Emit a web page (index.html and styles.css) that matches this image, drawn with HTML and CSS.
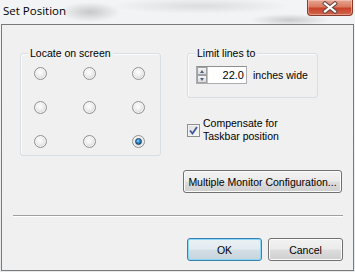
FILE: index.html
```html
<!DOCTYPE html>
<html lang="en">
<head>
    <meta charset="utf-8">
    <title>Set Position</title>
    <link rel="stylesheet" href="styles.css">
</head>
<body>
    <div class="window">
        <div class="titlebar">
            <span class="title">Set Position</span>
            <button class="close-btn" aria-label="Close">
                <svg width="18" height="13" viewBox="0 0 18 13">
                    <path d="M4 2.5 L14 10.5 M14 2.5 L4 10.5" stroke="#6b4a44" stroke-width="4.2" stroke-linecap="square" fill="none"/>
                    <path d="M4 2.5 L14 10.5 M14 2.5 L4 10.5" stroke="#ffffff" stroke-width="2.2" stroke-linecap="square" fill="none"/>
                </svg>
            </button>
        </div>

        <div class="client">
            <div class="top">
                <div class="group locate">
                    <span class="group-label">Locate on screen</span>
                    <div class="radio-grid">
                        <span class="radio"></span>
                        <span class="radio"></span>
                        <span class="radio"></span>
                        <span class="radio"></span>
                        <span class="radio"></span>
                        <span class="radio"></span>
                        <span class="radio"></span>
                        <span class="radio"></span>
                        <span class="radio checked"></span>
                    </div>
                </div>

                <div class="side">
                    <div class="group limit">
                        <span class="group-label">Limit lines to</span>
                        <div class="limit-row">
                            <div class="spin">
                                <span class="spin-btns">
                                    <span class="spin-up"></span>
                                    <span class="spin-down"></span>
                                </span>
                                <span class="spin-value">22.0</span>
                            </div>
                            <span>inches wide</span>
                        </div>
                    </div>

                    <label class="check">
                        <span class="check-box">
                            <svg width="9" height="9" viewBox="0 0 9 9">
                                <path d="M1 4.5 L3.5 7.5 L8 1" stroke="#3d5a9c" stroke-width="1.8" fill="none"/>
                            </svg>
                        </span>
                        <span class="check-text">Compensate for<br>Taskbar position</span>
                    </label>

                    <button class="btn monitor-btn">Multiple Monitor Configuration...</button>
                </div>
            </div>

            <hr class="separator">

            <div class="actions">
                <button class="btn default">OK</button>
                <button class="btn">Cancel</button>
            </div>
        </div>
    </div>
</body>
</html>
```

FILE: styles.css
```css
:root {
    --face: #f0f0f0;
    --text: #000000;
    --group-border: #d5dfe5;
    --btn-border: #707070;
    --default-border: #3c7fb1;
}

* {
    box-sizing: border-box;
}

html, body {
    margin: 0;
    padding: 0;
}

body {
    width: 355px;
    height: 272px;
    overflow: hidden;
    font-family: "Liberation Sans", Arial, sans-serif;
    font-size: 10.5px;
    color: var(--text);
    background: #e9ecee;
}

.window {
    width: 355px;
    height: 272px;
    background:
        radial-gradient(ellipse 30px 10px at 90px 12px, rgba(120, 120, 120, 0.35), transparent),
        radial-gradient(ellipse 90px 8px at 200px 6px, rgba(150, 150, 150, 0.25), transparent),
        radial-gradient(ellipse 40px 6px at 290px 20px, rgba(110, 110, 110, 0.3), transparent),
        linear-gradient(#f3f4f5, #e6e9eb);
    display: flex;
    flex-direction: column;
}

.titlebar {
    height: 24px;
    display: flex;
    justify-content: space-between;
    align-items: flex-start;
}

.title {
    font-family: "Open Sans", "Noto Sans", sans-serif;
    font-size: 11.5px;
    line-height: 16px;
    margin: 3px 0 0 3px;
    color: #000;
}

.close-btn {
    width: 46px;
    height: 16px;
    margin-right: 2px;
    padding: 0;
    border: 1px solid #8a3a2c;
    border-top: none;
    border-radius: 0 0 4px 4px;
    background: linear-gradient(#e7a592 0%, #d97a61 45%, #c7432a 55%, #d0674c 100%);
    box-shadow: inset 0 0 0 1px rgba(255, 220, 210, 0.45);
    display: flex;
    align-items: center;
    justify-content: center;
}

.client {
    flex: 1;
    margin: 0 1px 1px 1px;
    border: 1px solid #7a7a7a;
    background: var(--face);
    display: flex;
    flex-direction: column;
}

.top {
    display: flex;
    align-items: flex-start;
    padding: 28px 0 0 18px;
}

.group {
    border: 1px solid var(--group-border);
    border-radius: 3px;
    box-shadow: inset 1px 1px 0 #fbfcfd;
}

.group-label {
    display: table;
    margin: -7px 0 0 7px;
    padding: 0 2px;
    line-height: 13px;
    background: var(--face);
}

.locate {
    width: 141px;
    padding-bottom: 7px;
}

.radio-grid {
    display: grid;
    grid-template-columns: repeat(3, 13px);
    justify-content: space-between;
    row-gap: 21px;
    margin: 7px 15px 0 13px;
}

.radio {
    width: 13px;
    height: 13px;
    border-radius: 50%;
    border: 1px solid #929292;
    background: radial-gradient(circle at 45% 40%, #ffffff 0%, #f1f1f1 35%, #d4d4d4 80%, #c8c8c8 100%);
    box-shadow: inset 0 0 0 1px rgba(255, 255, 255, 0.6);
    display: flex;
    align-items: center;
    justify-content: center;
}

.radio.checked::after {
    content: "";
    width: 7px;
    height: 7px;
    border-radius: 50%;
    background: radial-gradient(circle at 40% 35%, #8fd3ff 0%, #2b86c8 45%, #17507e 100%);
    border: 1px solid #1c3e5e;
    box-sizing: border-box;
}

.side {
    display: flex;
    flex-direction: column;
    align-items: flex-start;
    margin-left: 22px;
}

.limit {
    width: 131px;
    margin-left: 4px;
    padding-bottom: 13px;
}

.limit-row {
    display: flex;
    align-items: center;
    gap: 6px;
    margin: 6px 0 0 8px;
}

.spin {
    width: 51px;
    height: 18px;
    border: 1px solid #abadb3;
    border-top-color: #8e8f8f;
    background: #fff;
    display: flex;
    align-items: center;
}

.spin-btns {
    width: 11px;
    height: 16px;
    display: flex;
    flex-direction: column;
    border-right: 1px solid #c5c5c5;
}

.spin-up,
.spin-down {
    flex: 1;
    border: 1px solid #a0a0a0;
    background: linear-gradient(#f4f4f4, #dcdcdc);
    position: relative;
}

.spin-up::after,
.spin-down::after {
    content: "";
    position: absolute;
    left: 2px;
    border-left: 2.5px solid transparent;
    border-right: 2.5px solid transparent;
}

.spin-up::after {
    top: 2px;
    border-bottom: 3px solid #4d6185;
}

.spin-down::after {
    top: 2px;
    border-top: 3px solid #4d6185;
}

.spin-value {
    flex: 1;
    text-align: right;
    padding-right: 2px;
    font-size: 11px;
    line-height: 13px;
}

.check {
    display: flex;
    align-items: flex-start;
    gap: 3px;
    margin: 19px 0 0 4px;
    line-height: 13px;
}

.check-box {
    width: 13px;
    height: 13px;
    margin-top: 7px;
    border: 1px solid #8e8f8f;
    background: linear-gradient(135deg, #dcdcdc, #f7f7f7);
    box-shadow: inset 0 0 0 1px #f4f4f4;
    display: flex;
    align-items: center;
    justify-content: center;
}

.btn {
    height: 23px;
    padding: 0;
    font-family: "Liberation Sans", Arial, sans-serif;
    font-size: 10.5px;
    color: #000;
    border: 1px solid var(--btn-border);
    border-radius: 3px;
    background: linear-gradient(#f2f2f2 0%, #ebebeb 48%, #dddddd 52%, #cfcfcf 100%);
    box-shadow: inset 0 0 0 1px #fcfcfc;
}

.monitor-btn {
    width: 159px;
    margin-top: 27px;
}

.separator {
    margin: 22px 0 0 11px;
    width: 330px;
    height: 2px;
    border: none;
    border-top: 1px solid #a0a0a0;
    border-bottom: 1px solid #ffffff;
}

.actions {
    display: flex;
    justify-content: flex-end;
    gap: 6px;
    padding: 21px 10px 0 0;
}

.actions .btn {
    width: 75px;
}

.btn.default {
    border-color: var(--default-border);
    background: linear-gradient(#eaf1f5 0%, #e2ebf0 48%, #d3dee5 52%, #c7d4dc 100%);
    box-shadow: inset 0 0 0 1px #8ad8f6;
}
```
